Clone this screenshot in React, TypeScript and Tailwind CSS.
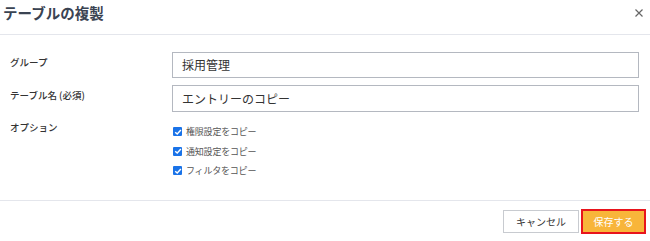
import React, { useState } from 'react';

const FONT = { fontFamily: '"Noto Sans CJK JP", "Noto Sans", sans-serif' };

function Check({ label }: { label: string }) {
  const [on, setOn] = useState(true);
  return (
    <label className="flex items-center gap-[4px] h-[19.5px] cursor-pointer" onClick={() => setOn(!on)}>
      <span
        className={`w-[9px] h-[9px] rounded-[1px] flex items-center justify-center ${
          on ? 'bg-[#1a73e8]' : 'border border-gray-400 bg-white'
        }`}
      >
        {on && (
          <svg width="8" height="8" viewBox="0 0 10 10">
            <path d="M1.5 5.2 L4 7.6 L8.6 2.4" stroke="white" strokeWidth="1.8" fill="none" />
          </svg>
        )}
      </span>
      <span className="text-[9px] tracking-[-0.2px] text-[#555]">{label}</span>
    </label>
  );
}

export default function App() {
  return (
    <div className="w-[650px] h-[241px] bg-white flex flex-col" style={FONT}>
      {/* Header */}
      <div className="h-[35px] flex items-center justify-between pl-[3px] pr-[7px] border-b border-[#e4e6ec]">
        <h1 className="text-[14.5px] font-bold text-[#3a4352] leading-none -mt-[8px]">テーブルの複製</h1>
        <svg width="8" height="8" viewBox="0 0 8 8" className="-mt-[8px]">
          <path d="M0.5 0.5 L7.5 7.5 M7.5 0.5 L0.5 7.5" stroke="#666" strokeWidth="1.2" />
        </svg>
      </div>

      {/* Body */}
      <div className="flex-1 pt-[17px] pl-[10px] pr-[11px]">
        <div className="grid grid-cols-[162px_1fr] gap-y-[7px]">
          <div className="text-[9.5px] font-medium text-[#333] leading-[20px]">グループ</div>
          <div className="h-[26px] border border-[#b4b8c0] flex items-center pl-[9px] text-[12px] text-[#333]">
            採用管理
          </div>
          <div className="text-[9.5px] font-medium text-[#333] leading-[20px]">テーブル名 (必須)</div>
          <div className="h-[27px] border border-[#b4b8c0] flex items-center pl-[9px] text-[12px] text-[#333]">
            エントリーのコピー
          </div>
          <div className="text-[9.5px] font-medium text-[#333] leading-[20px] -mt-[2px]">オプション</div>
          <div className="flex flex-col mt-[3px] pl-[1px]">
            <Check label="権限設定をコピー" />
            <Check label="通知設定をコピー" />
            <Check label="フィルタをコピー" />
          </div>
        </div>
      </div>

      {/* Footer */}
      <div className="h-[41px] border-t border-[#e4e6ec] flex items-center justify-end gap-[2px] pr-[4px] pt-[1px]">
        <button className="w-[76px] h-[23px] border border-[#c8cbd0] bg-white text-[10px] text-[#333]">
          キャンセル
        </button>
        <button className="w-[65px] h-[25px] border-2 border-[#e8141c] bg-[#f8b53a] text-[10px] text-white">
          保存する
        </button>
      </div>
    </div>
  );
}
